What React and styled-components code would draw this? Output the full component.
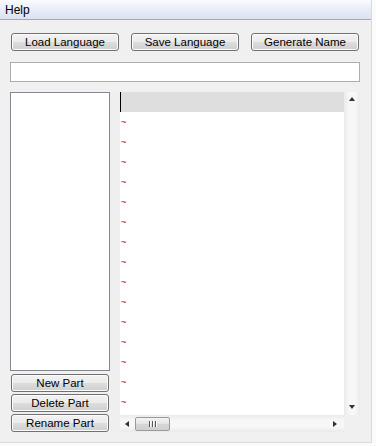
import React from "react";
import styled, {createGlobalStyle} from "styled-components";

const Global = createGlobalStyle`
  html, body { margin: 0; padding: 0; background: #fbfbfb; }
  body { font-family: "Liberation Sans", Arial, sans-serif; }
`;

const Window = styled.div`
  width: 372px;
  height: 443px;
  background: #f0f0f0;
  border-right: 1px solid #dadada;
  border-bottom: 1px solid #dadada;
  display: flex;
  flex-direction: column;
  box-sizing: border-box;
`;

const MenuBar = styled.div`
  height: 20px;
  box-sizing: border-box;
  border-bottom: 1px solid #a8a8a8;
  background: linear-gradient(to bottom, #fbfcfe 0%, #e9eef8 45%, #dbe2f2 100%);
  display: flex;
  align-items: center;
  padding-left: 5px;
  font-size: 12px;
  color: #000;
`;

const Body = styled.div`
  flex: 1;
  display: flex;
  flex-direction: column;
  padding: 13px 0 0 10px;
`;

const TopRow = styled.div`
  display: flex;
  gap: 12px;
  padding-left: 1px;
`;

const Button = styled.button`
  width: ${(p) => p.w || 108}px;
  height: 18px;
  padding: 0;
  margin: 0;
  box-sizing: border-box;
  border: 1px solid #707070;
  border-radius: 3px;
  background: linear-gradient(to bottom, #f2f2f2 0%, #ebebeb 50%, #dddddd 51%, #cfcfcf 100%);
  font-family: "Liberation Sans", Arial, sans-serif;
  font-size: 11.5px;
  color: #000;
  line-height: 16px;
  box-shadow: inset 0 0 0 1px #fcfcfc;
`;

const NameInput = styled.div`
  margin-top: 11px;
  width: 350px;
  height: 20px;
  box-sizing: border-box;
  border: 1px solid #abadb3;
  background: #fff;
`;

const Main = styled.div`
  margin-top: 10px;
  display: flex;
`;

const LeftCol = styled.div`
  width: 100px;
  display: flex;
  flex-direction: column;
  gap: 2px;
`;

const PartList = styled.div`
  height: 279px;
  box-sizing: border-box;
  border: 1px solid #828790;
  background: #fff;
  margin-bottom: 1px;
`;

const PartButtons = styled.div`
  display: flex;
  flex-direction: column;
  gap: 2px;
  padding-left: 1px;
`;

const Editor = styled.div`
  display: grid;
  grid-template-columns: 10px 224px 16px;
  grid-template-rows: 323px 17px;
`;

const Gutter = styled.div`
  background: #f1eef0;
  grid-row: 1 / 3;
`;

const Lines = styled.div`
  background: #fff;
  overflow: hidden;
  display: flex;
  flex-direction: column;
`;

const Line = styled.div`
  height: 20px;
  flex: none;
  box-sizing: border-box;
  background: ${(p) => (p.current ? "#dedede" : "#fff")};
  border-left: ${(p) => (p.current ? "1px solid #000" : "none")};
  color: #c00000;
  font-family: "DejaVu Sans Mono", monospace;
  font-size: 9px;
  line-height: 21px;
  padding-left: 1px;
`;

const VScroll = styled.div`
  background: linear-gradient(to right, #eaeaea, #f7f7f7 30%, #f7f7f7 70%, #eaeaea);
  display: flex;
  flex-direction: column;
  justify-content: space-between;
  align-items: center;
  padding: 5px 0 6px;
  box-sizing: border-box;
`;

const HScroll = styled.div`
  background: linear-gradient(to bottom, #eaeaea, #f7f7f7 30%, #f7f7f7 70%, #eaeaea);
  display: flex;
  align-items: center;
  padding: 0 7px 0 5px;
  box-sizing: border-box;
`;

const Corner = styled.div`
  background: #f0f0f0;
`;

const Arrow = styled.div`
  width: 0;
  height: 0;
  border: 3.5px solid transparent;
  ${(p) => p.dir === "up" && "border-bottom: 4px solid #303030; border-top-width: 0;"}
  ${(p) => p.dir === "down" && "border-top: 4px solid #303030; border-bottom-width: 0;"}
  ${(p) => p.dir === "left" && "border-right: 4px solid #303030; border-left-width: 0;"}
  ${(p) => p.dir === "right" && "border-left: 4px solid #303030; border-right-width: 0;"}
`;

const Thumb = styled.div`
  margin-left: 6px;
  width: 35px;
  height: 14px;
  box-sizing: border-box;
  border: 1px solid #9a9a9a;
  border-radius: 2px;
  background: linear-gradient(to bottom, #f4f4f4, #e4e4e4 50%, #d6d6d6 51%, #d0d0d0);
  display: flex;
  justify-content: center;
  align-items: center;
  gap: 2px;
`;

const Grip = styled.span`
  width: 1px;
  height: 6px;
  background: #555;
  box-shadow: 1px 0 0 #fff;
`;

const Spacer = styled.div`
  flex: 1;
`;

export default function App() {
  const lines = Array.from({length: 16}, (_, i) => i);
  return (
    <>
      <Global />
      <Window>
        <MenuBar>Help</MenuBar>
        <Body>
          <TopRow>
            <Button>Load Language</Button>
            <Button>Save Language</Button>
            <Button>Generate Name</Button>
          </TopRow>
          <NameInput />
          <Main>
            <LeftCol>
              <PartList />
              <PartButtons>
                <Button w={98}>New Part</Button>
                <Button w={98}>Delete Part</Button>
                <Button w={98}>Rename Part</Button>
              </PartButtons>
            </LeftCol>
            <Editor>
              <Gutter />
              <Lines>
                {lines.map((i) => (
                  <Line key={i} current={i === 0}>
                    {i === 0 ? "" : "~"}
                  </Line>
                ))}
              </Lines>
              <VScroll>
                <Arrow dir="up" />
                <Arrow dir="down" />
              </VScroll>
              <HScroll>
                <Arrow dir="left" />
                <Thumb>
                  <Grip />
                  <Grip />
                  <Grip />
                </Thumb>
                <Spacer />
                <Arrow dir="right" />
              </HScroll>
              <Corner />
            </Editor>
          </Main>
        </Body>
      </Window>
    </>
  );
}
